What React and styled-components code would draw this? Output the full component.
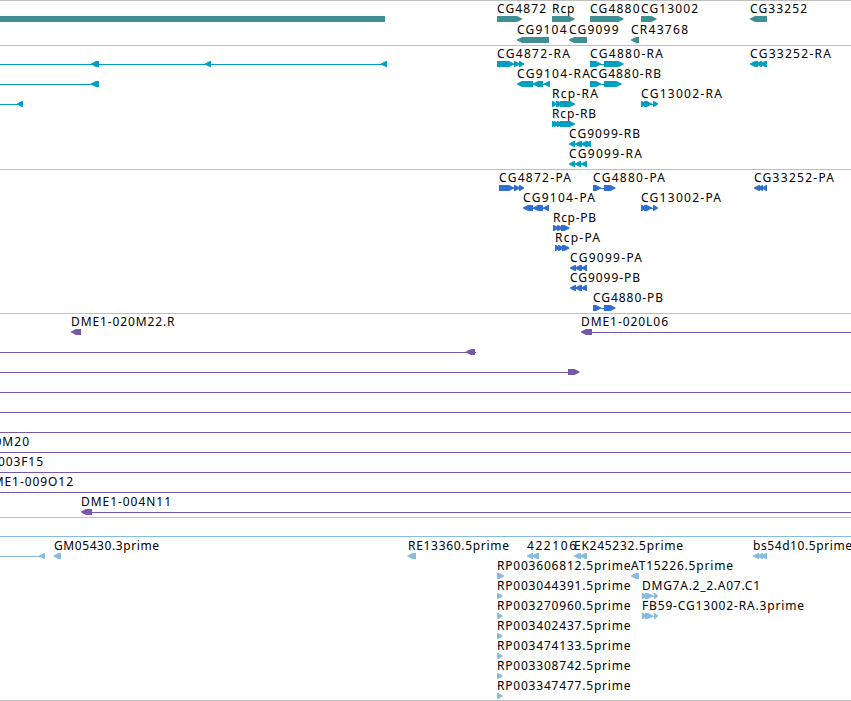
import React from "react";
import styled, { createGlobalStyle } from "styled-components";

const GlobalStyle = createGlobalStyle`
  body { margin: 0; background: #fff; overflow: hidden; }
`;

const Browser = styled.main`
  display: flex;
  flex-direction: column;
  width: 851px;
  height: 701px;
  overflow: hidden;
  background: #fff;
`;

const Track = styled.section`
  display: flex;
  flex-direction: column;
  box-sizing: border-box;
  flex: none;
  height: ${(p) => p.$height}px;
  border-top: 1px solid #bfbfbf;
  color: ${(p) => p.$color};
`;

const Lane = styled.svg`
  display: block;
  flex: none;
  width: 851px;
  height: ${(p) => p.$height}px;
  overflow: visible;
  fill: currentColor;
`;

const Label = styled.text`
  font-family: "Noto Sans", "Open Sans", sans-serif;
  font-size: 12px;
  fill: #000;
`;

const MID = 18;

function Exon({ start, end, dir }) {
  const w = end - start;
  const h = Math.min(6, w);
  const at = (d) => (dir === "l" ? start + d : end - d);
  const back = dir === "l" ? end : start;
  return (
    <path
      d={`M${back} 15L${at(h - 1)} 15L${at(h / 2)} 15.9L${at(0)} 17.5V18.5L${at(h / 2)} 20.1L${at(h - 1)} 21L${back} 21Z`}
    />
  );
}

// A feature is { dir, exons: [[start, end]], line: [from, to], bar: [from, to] }.
function Feature({ dir, exons = [], line, bar }) {
  const span = line || (exons.length > 1 ? [exons[0][0] + 1, exons[exons.length - 1][1] - 1] : null);
  return (
    <g>
      {bar && <rect x={bar[0]} y="15" width={bar[1] - bar[0]} height="6" />}
      {span && <rect x={span[0]} y={MID} width={span[1] - span[0]} height="1" />}
      {exons.map(([s, e], i) => (
        <Exon key={i} start={s} end={e} dir={dir} />
      ))}
    </g>
  );
}

const r = (...exons) => ({ dir: "r", exons });
const l = (...exons) => ({ dir: "l", exons });
const line = (from, to, dir, ...exons) => ({ dir, exons, line: [from, to] });
const full = () => line(0, 851);

const cg13002 = r([641, 646], [644, 652], [653, 658]);
const rpNames = ["RP003044391", "RP003270960", "RP003402437", "RP003474133", "RP003308742", "RP003347477"];
const rpExtra = {
  0: { f: [r([642, 647], [645, 653], [654, 658])], t: [["DMG7A.2_2.A07.C1", 642, 760]] },
  1: { f: [r([642, 647], [645, 653], [654, 658])], t: [["FB59-CG13002-RA.3prime", 642, 804]] },
};

const tracks = [
  {
    color: "#3f8f94", height: 45, lane: 21,
    lanes: [
      { f: [{ bar: [0, 385] }, r([497, 522]), r([552, 574.5]), r([590, 623.5]), r([641, 656.5]), l([750, 767])],
        t: [["CG4872", 497, 546], ["Rcp", 552, 574.5], ["CG4880", 590, 639.5], ["CG13002", 641, 698], ["CG33252", 750, 807]] },
      { f: [l([517, 549]), l([569, 587]), l([631, 639])],
        t: [["CG9104", 517, 566.5], ["CG9099", 569, 618.5], ["CR43768", 631, 688]] },
    ],
  },
  {
    color: "#009fbf", height: 124, lane: 20,
    lanes: [
      { f: [line(0, 386, "l", [91, 99], [205, 211], [381, 387]), r([497, 514], [514, 520], [519, 524]), r([590, 601], [604, 623.5]), l([750, 758], [756, 762], [760, 767])],
        t: [["CG4872-RA", 497, 570], ["CG4880-RA", 590, 663], ["CG33252-RA", 750, 831]] },
      { f: [line(0, 98, "l", [91, 99]), l([517, 533], [533, 543], [544, 550]), r([590, 601], [604, 621.5])],
        t: [["CG9104-RA", 517, 590], ["CG4880-RB", 590, 661]] },
      { f: [line(0, 22, "l", [17, 23]), r([552, 557], [556, 563], [560, 575]), cg13002],
        t: [["Rcp-RA", 552, 598], ["CG13002-RA", 641, 722]] },
      { f: [r([552, 556], [554, 559], [557, 563], [560, 575])], t: [["Rcp-RB", 552, 596]] },
      { f: [l([569, 575], [575, 582], [581, 588], [585, 591])], t: [["CG9099-RB", 569, 640]] },
      { f: [l([569, 575], [575, 581], [581, 587])], t: [["CG9099-RA", 569, 642]] },
    ],
  },
  {
    color: "#306fcf", height: 144, lane: 20,
    lanes: [
      { f: [r([499, 514], [514, 520], [519, 524]), r([593, 601], [604, 615.5]), l([754, 760], [758, 763], [762, 767])],
        t: [["CG4872-PA", 499, 571], ["CG4880-PA", 593, 665], ["CG33252-PA", 754, 834]] },
      { f: [l([523, 533], [533, 543], [543, 549]), cg13002], t: [["CG9104-PA", 523, 595], ["CG13002-PA", 641, 721]] },
      { f: [r([553, 559], [557, 563], [561, 569.5])], t: [["Rcp-PB", 553, 596]] },
      { f: [r([555, 560], [558, 564], [562, 569.5])], t: [["Rcp-PA", 555, 600]] },
      { f: [l([570, 576], [575, 582], [581, 587])], t: [["CG9099-PA", 570, 642]] },
      { f: [l([570, 576], [575, 582], [581, 587])], t: [["CG9099-PB", 570, 640]] },
      { f: [r([593, 601], [604, 615.5])], t: [["CG4880-PB", 593, 663]] },
    ],
  },
  {
    color: "#7757a9", height: 204, lane: 20,
    lanes: [
      { f: [l([71, 81]), line(582, 851, "l", [581, 592])], t: [["DME1-020M22.R", 71, 174.5], ["DME1-020L06", 581, 668]] },
      { f: [line(0, 476, "l", [466, 475])] },
      { f: [line(0, 578, "r", [568, 579.5])] },
      { f: [full()] },
      { f: [full()] },
      { f: [full()] },
      { f: [full()], t: [["0M20", -5.5, 29]] },
      { f: [full()], t: [["003F15", -2, 43]] },
      { f: [full()], t: [["DME1-009O12", -17, 73]] },
      { f: [line(82, 851, "l", [81, 92])], t: [["DME1-004N11", 81, 171]] },
    ],
  },
  {
    color: "#88bbdd", height: 183, lane: 20,
    lanes: [
      { f: [full()] },
      { f: [line(0, 44, "l", [39, 45]), l([53.5, 61]), l([407.5, 416]), l([527, 533], [532, 539]), l([574, 581], [580, 587]), l([753, 759], [757, 763], [761, 767])],
        t: [["GM05430.3prime", 54, 159], ["RE13360.5prime", 408, 509], ["422106", 527, 576], ["EK245232.5prime", 574, 683], ["bs54d10.5prime", 753, 852]] },
      { f: [r([497, 504]), l([631, 639])], t: [["RP003606812.5prime", 497, 630.5], ["AT15226.5prime", 631, 733]] },
      ...rpNames.map((name, i) => ({
        f: [r([497, 502.5]), ...(rpExtra[i]?.f || [])],
        t: [[`${name}.5prime`, 497, 630.5], ...(rpExtra[i]?.t || [])],
      })),
    ],
  },
];

export default function App() {
  return (
    <>
      <GlobalStyle />
      <Browser>
        {tracks.map((track) => (
          <Track key={track.color} $color={track.color} $height={track.height}>
            {track.lanes.map((lane, i) => (
              <Lane key={i} $height={track.lane}>
                {lane.f.map((feature, j) => (
                  <Feature key={j} {...feature} />
                ))}
                {(lane.t || []).map(([text, from, to]) => (
                  <Label key={text} x={from} y="12" textLength={to - from}>
                    {text}
                  </Label>
                ))}
              </Lane>
            ))}
          </Track>
        ))}
        <Track $height={1} />
      </Browser>
    </>
  );
}
